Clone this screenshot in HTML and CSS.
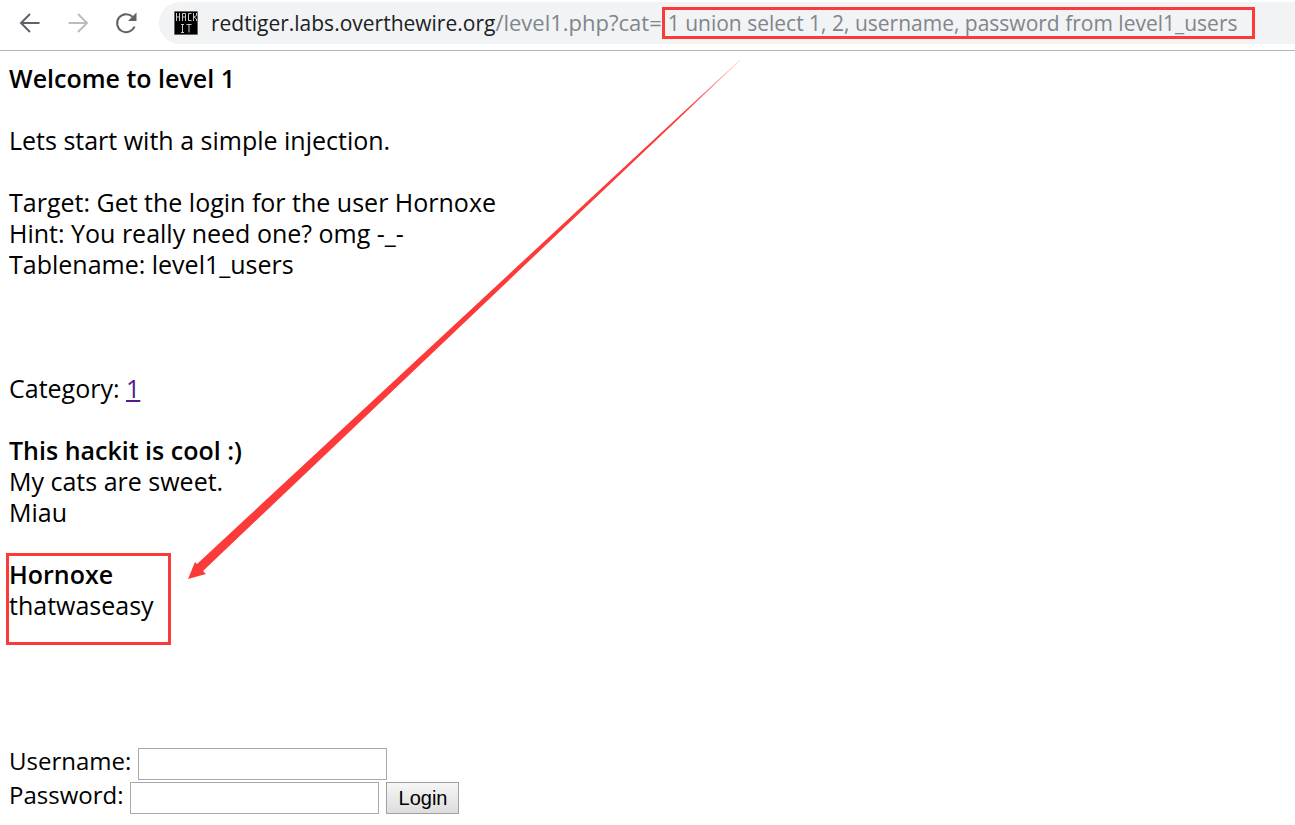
FILE: index.html
```
<!DOCTYPE html>
<html lang="en">
<head>
<meta charset="utf-8">
<title>Level 1</title>
<link rel="stylesheet" href="styles.css">
</head>
<body>
<header class="toolbar">
  <button class="nav" type="button" aria-label="Back">
    <svg viewBox="0 0 24 24" width="24" height="24"><path d="M21.500 12H3M12 3L3 12l9 9" /></svg>
  </button>
  <button class="nav nav-off" type="button" aria-label="Forward">
    <svg viewBox="0 0 24 24" width="24" height="24"><path d="M2.500 12H21M12 3l9 9-9 9" /></svg>
  </button>
  <button class="nav" type="button" aria-label="Reload">
    <svg viewBox="0 0 24 24" width="24" height="24"><path d="M20.500 15.500A9 9 0 1 1 18.500 5.800" /><path class="fill" d="M22.500 1.500V10h-8.500z" /></svg>
  </button>
  <div class="address">
    <svg class="favicon" viewBox="0 0 24 24" width="24" height="24" aria-hidden="true">
      <rect width="24" height="24" fill="#000" />
      <path d="M2.500 2v8M5.500 2v8M2.500 6h3M8.500 10V2.500h3V10M8.500 6h3M17.500 2.500h-3v7h3M19.500 2v8M22.500 2v2.500L20 6l2.500 2V10M7 13.500h3M8.500 13.500v8M7 21.500h3M12.500 13.500h5M15 13.500v8" />
    </svg>
    <div class="url" role="textbox" aria-label="Address"><span class="host">redtiger.labs.overthewire.org</span>/level1.php?cat=<span class="query">1 union select 1, 2, username, password from level1_users</span></div>
  </div>
</header>
<main class="page">
  <p><b>Welcome to level 1</b></p>
  <p>Lets start with a simple injection.</p>
  <p>Target: Get the login for the user Hornoxe<br>Hint: You really need one? omg -_-<br>Tablename: level1_users</p>
  <p class="category">Category: <a href="#cat">1</a></p>
  <p><b>This hackit is cool :)</b><br>My cats are sweet.<br>Miau</p>
  <p class="result"><b>Hornoxe</b><br>thatwaseasy</p>
  <form class="login">
    <div class="row"><label for="user">Username:</label><input id="user" type="text"></div>
    <div class="row"><label for="pass">Password:</label><input id="pass" type="password"><button type="button">Login</button></div>
  </form>
</main>
<svg class="arrow" viewBox="0 0 552 519" width="552" height="519" aria-hidden="true">
  <defs><linearGradient id="fade" x1="1" y1="0" x2="0" y2="1"><stop offset="0" stop-color="#fc3a3a" stop-opacity=".2" /><stop offset=".1" stop-color="#fc3a3a" /></linearGradient></defs>
  <path fill="url(#fade)" d="M551.500 0L9 504 7 502 0 519l18-5-3-3L552 .5z" />
</svg>
</body>
</html>
```
FILE: styles.css
```
body {
  margin: 0;
  position: relative;
  background: #fff;
  color: #000;
  font: 25px/31px "Open Sans", "Noto Sans", sans-serif;
}

.toolbar {
  display: flex;
  align-items: center;
  gap: 24px;
  box-sizing: border-box;
  height: 51px;
  padding: 2px 0 6px 18px;
  border-bottom: 1px solid #b4b4b4;
}

.nav {
  display: flex;
  padding: 0;
  border: 0;
  background: none;
}

.nav svg {
  fill: none;
  stroke: #5f6368;
  stroke-width: 2;
}

.nav .fill {
  fill: #5f6368;
  stroke: none;
}

.nav-off svg {
  stroke: #babcbe;
}

.address {
  display: flex;
  flex: 1;
  align-items: center;
  gap: 13px;
  height: 42px;
  padding-left: 15px;
  margin-left: -3px;
  border-radius: 21px 0 0 21px;
  background: #f1f3f4;
}

.favicon {
  flex: none;
  fill: none;
  stroke: #c8c8c8;
}

.url {
  flex: 1;
  color: #80868b;
  font-size: 22px;
  white-space: nowrap;
}

.host,
.query {
  font-size: 21px;
}

.host {
  color: #202124;
}

.query {
  display: inline-block;
  padding: 0 15px 0 3px;
  border: 3px solid #fc3a3a;
  line-height: 26px;
}

.page {
  padding: 12px 9px;
}

.page p {
  margin: 0 0 31px;
}

.page b {
  font-weight: 600;
}

.page .category {
  margin-top: 93px;
}

.page a {
  color: #551a8b;
}

.page .result {
  box-sizing: border-box;
  width: 165px;
  height: 92px;
  margin: -6px 0 103px -3px;
  padding-top: 3px;
  border: 3px solid #fc3a3a;
}

.row {
  display: flex;
  align-items: flex-start;
  gap: 7px;
  margin-bottom: 2px;
}

.row label {
  font-size: 24px;
  line-height: 26px;
}

.row input {
  box-sizing: border-box;
  width: 249px;
  height: 32px;
  border: 1px solid #a9a9a9;
}

.row button {
  box-sizing: border-box;
  height: 32px;
  width: 73px;
  padding: 0;
  border: 1px solid #a0a0a0;
  background: linear-gradient(#f6f6f6, #dddddd);
  color: #000;
  font: 20px "Liberation Sans", Arial, sans-serif;
}

.arrow {
  position: absolute;
  left: 188px;
  top: 60px;
  pointer-events: none;
}
```
